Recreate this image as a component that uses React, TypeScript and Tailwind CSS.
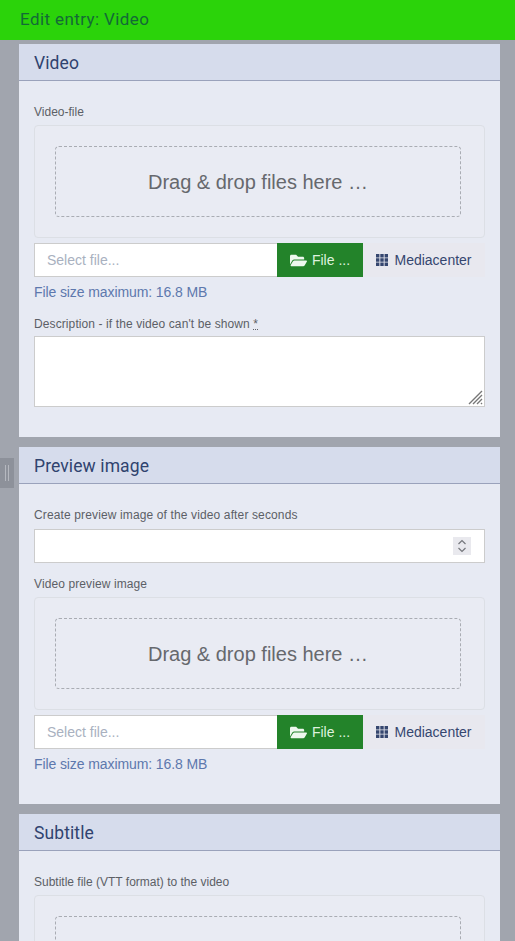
import { FaFolderOpen } from "react-icons/fa";

const Label = ({ children }: { children: React.ReactNode }) => (
  <div className="font-['Liberation_Sans',sans-serif] text-[12px] leading-[14px] text-[#5c5f66]">{children}</div>
);

const PanelTitle = ({ title }: { title: string }) => (
  <div className="h-[37px] pl-[15px] pt-[2px] flex items-center bg-[#d6dcec] border-b border-[#9aa2bb] font-['Roboto',sans-serif] text-[17.5px] tracking-[0.1px] text-[#30436f]">
    {title}
  </div>
);

const DropZone = ({ text }: { text?: string }) => (
  <div className="h-[113px] mt-[6px] pt-5 pl-5 pr-[23px] rounded-[4px] border border-[#dcdfe5] bg-[#e9ebf3]">
    <div className="h-[71px] flex items-center justify-center rounded-[4px] border border-dashed border-[#a9acb3] font-['Liberation_Sans',sans-serif] text-[20px] text-[#66686d]">
      {text}
    </div>
  </div>
);

// 3x3 grid, tighter than the package's th icon
const GridIcon = () => (
  <svg width="12" height="12" viewBox="0 0 12 12" fill="currentColor">
    <path d="M0 0h3.4v3.4H0zM4.3 0h3.4v3.4H4.3zM8.6 0H12v3.4H8.6zM0 4.3h3.4v3.4H0zM4.3 4.3h3.4v3.4H4.3zM8.6 4.3H12v3.4H8.6zM0 8.6h3.4V12H0zM4.3 8.6h3.4V12H4.3zM8.6 8.6H12V12H8.6z" />
  </svg>
);

const FileRow = () => (
  <>
    <div className="flex h-[34px] mt-[5px] font-['Liberation_Sans',sans-serif] text-[14px]">
      <div className="w-[243px] pl-3 flex items-center bg-white border border-[#cccccc] border-r-0 text-[#a9b1c0]">
        Select file...
      </div>
      <div className="w-[86px] flex items-center justify-center gap-[5px] bg-[#23832a] text-[#dff2df]">
        <FaFolderOpen className="text-[17px] text-[#eef8ee]" />
        File ...
      </div>
      <div className="w-[122px] flex items-center justify-center gap-[6px] bg-[#e8e8ef] text-[#35466f]">
        <GridIcon />
        Mediacenter
      </div>
    </div>
    <div className="mt-[7px] font-['Liberation_Sans',sans-serif] text-[14px] tracking-[-0.1px] leading-[16px] text-[#5d78ad]">
      File size maximum: 16.8 MB
    </div>
  </>
);

export default function App() {
  return (
    <div className="relative h-[941px] overflow-hidden bg-[#a1a5ae]">
      <div className="h-10 pl-5 flex items-center bg-[#2bd30a] font-['Roboto',sans-serif] text-[17px] tracking-[0.4px] text-[#136a37]">
        Edit entry: Video
      </div>

      {/* sidebar grip */}
      <div className="absolute left-0 top-[458px] w-[14px] h-[30px] flex justify-center gap-[2px] py-[7px] bg-[#8d919a]">
        <div className="w-px bg-[#b5b8bf]" />
        <div className="w-px bg-[#b5b8bf]" />
      </div>

      <div className="w-[481px] ml-[19px] mt-1 flex flex-col gap-[10px]">
        <section className="h-[393px] bg-[#e7eaf3]">
          <PanelTitle title="Video" />
          <div className="px-[15px] pt-[24px]">
            <Label>Video-file</Label>
            <DropZone text="Drag & drop files here …" />
            <FileRow />
            <div className="mt-[17px] tracking-[0.1px]">
              <Label>Description - if the video can't be shown <span className="underline decoration-dotted">*</span></Label>
            </div>
            <div className="relative h-[71px] mt-[5px] bg-white border border-[#cccccc]">
              <svg className="absolute right-px bottom-px" width="15" height="15" viewBox="0 0 15 15" stroke="#777777" strokeWidth="1.4">
                <path d="M1 14 L14 1 M5 14 L14 5 M9 14 L14 9 M13 14 L14 13" />
              </svg>
            </div>
          </div>
        </section>

        <section className="h-[357px] bg-[#e7eaf3]">
          <PanelTitle title="Preview image" />
          <div className="px-[15px] pt-[24px]">
            <div className="tracking-[0.13px]">
              <Label>Create preview image of the video after seconds</Label>
            </div>
            <div className="relative h-[34px] mt-[7px] bg-white border border-[#cccccc]">
              <div className="absolute right-[13px] top-[7px] w-[18px] h-[18px] flex items-center justify-center bg-[#e9e9ee]">
                <svg width="10" height="14" viewBox="0 0 10 14" fill="none" stroke="#75777c" strokeWidth="1.2">
                  <path d="M1.5 5 L5 1.5 L8.5 5 M1.5 9 L5 12.5 L8.5 9" />
                </svg>
              </div>
            </div>
            <div className="mt-[14px] tracking-[0.1px]">
              <Label>Video preview image</Label>
            </div>
            <DropZone text="Drag & drop files here …" />
            <FileRow />
          </div>
        </section>

        <section className="h-[200px] bg-[#e7eaf3]">
          <PanelTitle title="Subtitle" />
          <div className="px-[15px] pt-[24px]">
            <Label>Subtitle file (VTT format) to the video</Label>
            <DropZone />
          </div>
        </section>
      </div>
    </div>
  );
}
